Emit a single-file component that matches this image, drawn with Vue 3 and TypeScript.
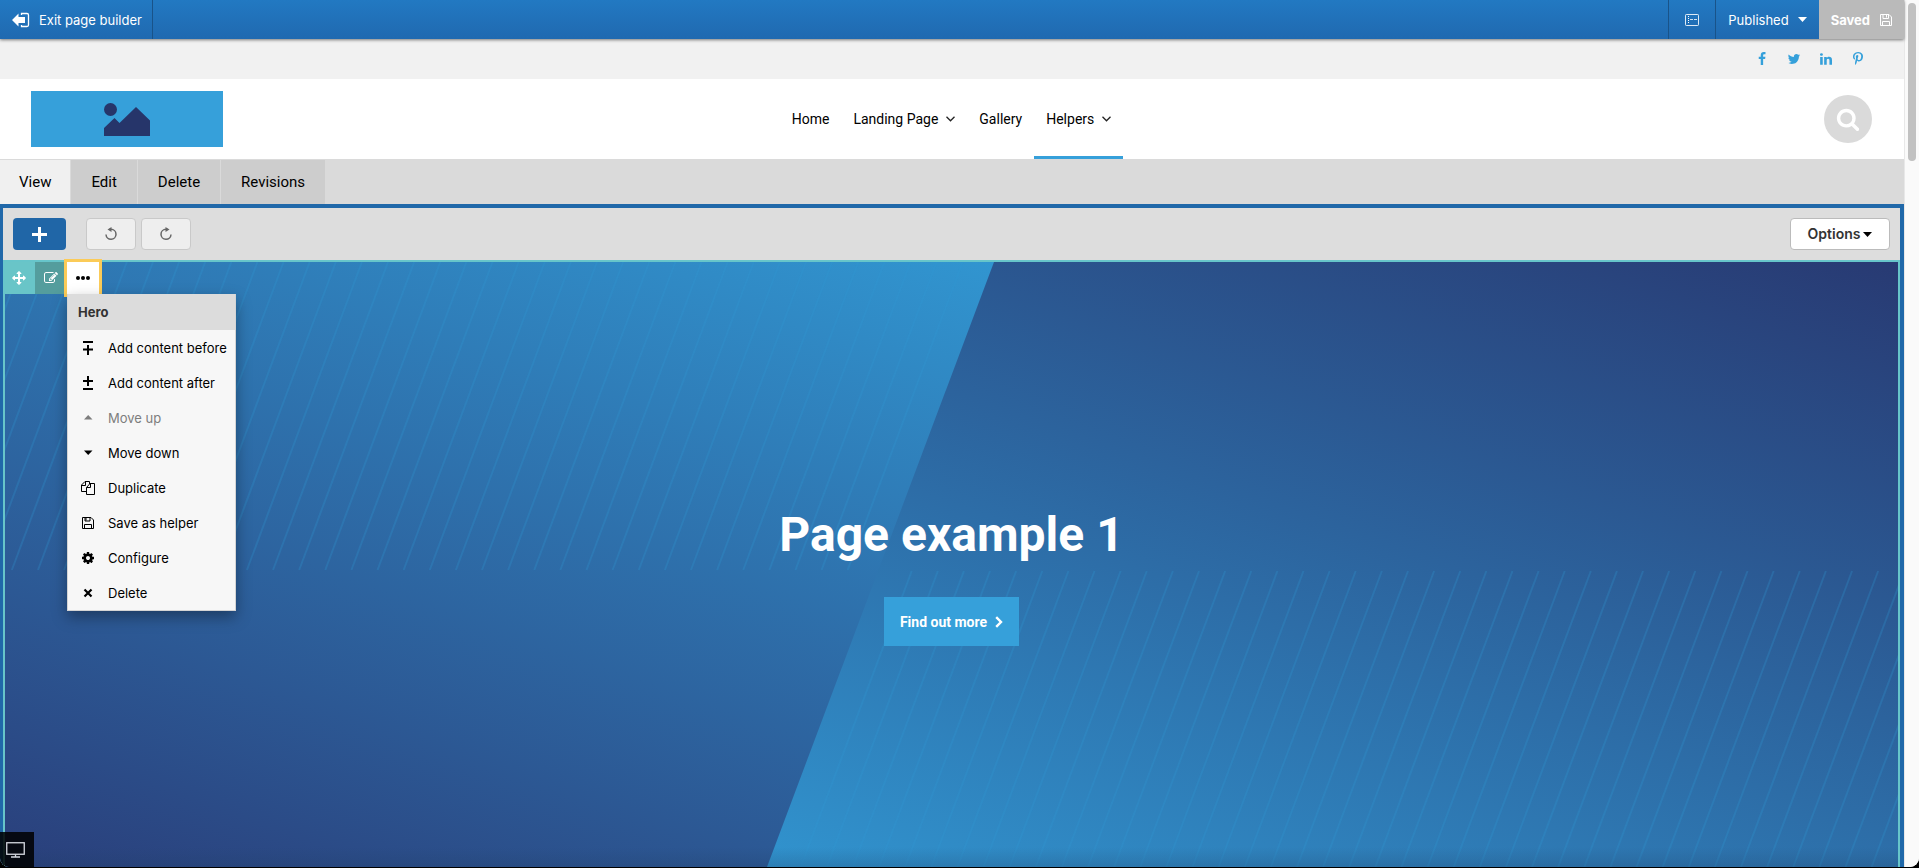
<script setup lang="ts">
interface Action {
  label: string
  icon: string
  disabled?: boolean
}

const social = [
  { name: 'Facebook', d: 'M1343 12v264h-157q-86 0-116 36t-30 108v189h293l-39 296h-254v759h-306v-759h-255v-296h255v-218q0-186 104-288.5t277-102.5q147 0 228 12z' },
  { name: 'Twitter', d: 'M1684 408q-67 98-162 167 1 14 1 42 0 130-38 259.5t-115.5 248.5-184.5 210.5-258 146-323 54.5q-271 0-496-145 35 4 78 4 225 0 401-138-105-2-188-64.5t-114-159.5q33 5 61 5 43 0 85-11-112-23-185.5-111.5t-73.5-205.5v-4q68 38 146 41-66-44-105-115t-39-154q0-88 44-163 121 149 294.5 238.5t371.5 99.5q-8-38-8-74 0-134 94.5-228.5t228.5-94.5q140 0 236 102 109-21 205-78-37 115-142 178 93-10 186-50z' },
  { name: 'LinkedIn', d: 'M477 625v991h-330v-991h330zm21-306q1 73-50.5 122t-135.5 49h-2q-82 0-132-49t-50-122q0-74 51.5-122.5t134.5-48.5 133 48.5 51 122.5zm1166 729v568h-329v-530q0-105-40.5-164.5t-126.5-59.5q-63 0-105.5 34.5t-63.5 85.5q-11 30-11 81v553h-329q2-399 2-647t-1-296l-1-48h329v144h-2q20-32 41-56t56.5-52 87-43.5 114.5-15.5q171 0 275 113.5t104 332.5z' },
  { name: 'Pinterest', d: 'M256 597q0-108 37.5-203.5t103.5-166.5 152-123 185-78 202-26q158 0 294 66.5t221 193.5 85 287q0 96-19 188t-60 177-100 149.5-145 103-189 38.5q-68 0-135-32t-96-88q-10 39-28 112.5t-23.5 95-20.5 71-26 71-32 62.5-46 77.5-62 86.5l-14 5-9-10q-15-157-15-188 0-92 21.5-206.5t66.5-287.5 52-203q-32-65-32-169 0-83 52-156t132-73q61 0 95 40.5t34 102.5q0 66-44 191t-44 187q0 63 45 104.5t109 41.5q55 0 102-25t78.5-68 56-95 38-110.5 20-111 6.5-99.5q0-173-109.5-269.5t-285.5-96.5q-200 0-334 129.5t-134 328.5q0 44 12.5 85t27 65 27 45.5 12.5 30.5q0 28-15 73t-37 45q-2 0-17-3-51-15-90.5-56t-61-94.5-32.5-108-11-106.5z' },
]

const links = [
  { label: 'Home', menu: false, active: false },
  { label: 'Landing Page', menu: true, active: false },
  { label: 'Gallery', menu: false, active: false },
  { label: 'Helpers', menu: true, active: true },
]

const tabs = ['View', 'Edit', 'Delete', 'Revisions']

const actions: Action[] = [
  { label: 'Add content before', icon: 'before' },
  { label: 'Add content after', icon: 'after' },
  { label: 'Move up', icon: 'up', disabled: true },
  { label: 'Move down', icon: 'down' },
  { label: 'Duplicate', icon: 'copy' },
  { label: 'Save as helper', icon: 'save' },
  { label: 'Configure', icon: 'cog' },
  { label: 'Delete', icon: 'cross' },
]
</script>

<template>
  <div class="window">
    <div class="page">
      <div class="topbar">
        <button class="bar-btn exit" type="button">
          <svg width="18" height="16" viewBox="0 0 18 16">
            <path d="M0 8 6.500 1.500V5H13v6H6.500v3.500z" fill="#fff" />
            <path d="M9.500 3V1.500h5.500q1.500 0 1.500 1.500v10q0 1.500-1.500 1.500h-5.500V13" fill="none" stroke="#fff" stroke-width="1.300" />
          </svg>
          <span>Exit page builder</span>
        </button>
        <div class="bar-right">
          <button class="bar-btn layout" type="button" aria-label="Layout">
            <svg width="14" height="12" viewBox="0 0 14 12" fill="none" stroke="#fff">
              <rect x=".5" y=".5" width="13" height="11" rx=".8" opacity=".85" />
              <path d="M3.500 2v8" stroke-dasharray="1 1" />
              <path d="M5 5.500h7" stroke-dasharray="3 1" opacity=".8" />
            </svg>
          </button>
          <button class="bar-btn published" type="button">
            <span>Published</span>
            <svg width="9" height="5" viewBox="0 0 9 5"><path d="M0 0h9L4.500 5z" fill="#fff" /></svg>
          </button>
          <button class="bar-btn saved" type="button">
            <span>Saved</span>
            <svg width="12" height="12" viewBox="0 0 12 12" fill="none" stroke="#fff"><path d="M.5.500h8.500L11.500 3v8.500H.5zM3 .500v4h5.500v-4M2.500 11.500V7.500h7v4M6.500 1v2.500" /></svg>
          </button>
        </div>
      </div>

      <div class="social">
        <a v-for="s in social" :key="s.name" href="#" :aria-label="s.name">
          <svg width="14" height="14" viewBox="0 0 1792 1792"><path :d="s.d" fill="currentColor" /></svg>
        </a>
      </div>

      <header class="site-header">
        <a class="logo" href="#" aria-label="Site logo">
          <svg width="46" height="33" viewBox="0 0 46 33" fill="#26356a">
            <circle cx="6.500" cy="6.500" r="6.500" />
            <path d="M0 25 10.500 15l5 5L32 4l14 13.500V33H0z" />
          </svg>
        </a>
        <nav class="main-nav">
          <a v-for="l in links" :key="l.label" href="#" :class="{ active: l.active }">
            <span>{{ l.label }}</span>
            <svg v-if="l.menu" width="9" height="6" viewBox="0 0 9 6" fill="none" stroke="#222" stroke-width="1.300"><path d="M.5.800 4.500 4.800l4-4" /></svg>
          </a>
        </nav>
        <button class="search" type="button" aria-label="Search">
          <svg width="24" height="24" viewBox="0 0 1792 1792"><path fill="#fff" d="M1216 832q0-185-131.500-316.500t-316.500-131.500-316.500 131.500-131.500 316.500 131.500 316.500 316.500 131.500 316.500-131.500 131.500-316.500zm512 832q0 52-38 90t-90 38q-54 0-90-38l-343-342q-179 124-399 124-143 0-273.500-55.500t-225-150-150-225-55.500-273.500 55.500-273.500 150-225 225-150 273.500-55.500 273.500 55.500 225 150 150 225 55.500 273.500q0 220-124 399l343 343q37 37 37 90z" /></svg>
        </button>
      </header>

      <nav class="tabs">
        <a v-for="(t, i) in tabs" :key="t" href="#" :class="{ current: i === 0 }">{{ t }}</a>
      </nav>

      <main class="builder">
        <div class="toolbar">
          <button class="add" type="button" aria-label="Add content">
            <svg width="15" height="15" viewBox="0 0 15 15"><path d="M7.500 0v15M0 7.500h15" stroke="#fff" stroke-width="3" /></svg>
          </button>
          <div class="history">
            <button type="button" aria-label="Undo">
              <svg width="14" height="14" viewBox="0 0 14 14"><path d="M2 7.500a5 5 0 1 0 5-5.200H5.500" fill="none" stroke="#666" stroke-width="1.500" /><path d="M3.500 2.500 7.500 0v5z" fill="#666" /></svg>
            </button>
            <button type="button" aria-label="Redo">
              <svg width="14" height="14" viewBox="0 0 14 14"><path d="M12 7.500a5 5 0 1 1-5-5.200H8.500" fill="none" stroke="#666" stroke-width="1.500" /><path d="M10.500 2.500 6.500 0v5z" fill="#666" /></svg>
            </button>
          </div>
          <button class="options" type="button">
            <span>Options</span>
            <svg width="9" height="5" viewBox="0 0 9 5"><path d="M0 0h9L4.500 5z" /></svg>
          </button>
        </div>

        <section class="hero">
          <svg class="hero-art" viewBox="0 0 1893 605" preserveAspectRatio="none" aria-hidden="true">
            <defs>
              <linearGradient id="shade-left" gradientUnits="userSpaceOnUse" x1="0" y1="605" x2="301" y2="-253">
                <stop offset="0" stop-color="#2a3f7b" />
                <stop offset="1" stop-color="#3196d1" />
              </linearGradient>
              <linearGradient id="shade-right" gradientUnits="userSpaceOnUse" x1="1893" y1="0" x2="1570" y2="921">
                <stop offset="0" stop-color="#283a73" />
                <stop offset="1" stop-color="#3196d1" />
              </linearGradient>
              <linearGradient id="shade-foot" x1="0" y1="0" x2="0" y2="1">
                <stop offset="0" stop-color="#1d3f66" stop-opacity="0" />
                <stop offset="1" stop-color="#1d3f66" stop-opacity=".25" />
              </linearGradient>
            </defs>
            <rect width="1893" height="605" fill="url(#shade-right)" />
            <path d="M0 0H989L762 605H0z" fill="url(#shade-left)" />
            <g stroke="#3196d4" stroke-opacity=".27" stroke-width="2">
              <line v-for="n in 37" :key="'l' + n" :x1="842.700 - (n - 1) * 26.120 + 115" y1="0" :x2="842.700 - (n - 1) * 26.120" y2="308" />
              <line v-for="n in 42" :key="'r' + n" :x1="906.700 + (n - 1) * 26.120" y1="309" :x2="795.700 + (n - 1) * 26.120" y2="605" />
            </g>
            <rect y="585" width="1893" height="20" fill="url(#shade-foot)" />
          </svg>

          <div class="block-tools">
            <button class="move" type="button" aria-label="Move block">
              <svg width="14" height="14" viewBox="0 0 1792 1792"><path fill="#fff" d="M1792 896q0 26-19 45l-256 256q-19 19-45 19t-45-19-19-45v-128h-384v384h128q26 0 45 19t19 45-19 45l-256 256q-19 19-45 19t-45-19l-256-256q-19-19-19-45t19-45 45-19h128v-384h-384v128q0 26-19 45t-45 19-45-19l-256-256q-19-19-19-45t19-45l256-256q19-19 45-19t45 19 19 45v128h384v-384h-128q-26 0-45-19t-19-45 19-45l256-256q19-19 45-19t45 19l256 256q19 19 19 45t-19 45-45 19h-128v384h384v-128q0-26 19-45t45-19 45 19l256 256q19 19 19 45z" /></svg>
            </button>
            <button class="edit" type="button" aria-label="Edit block">
              <svg width="14" height="14" viewBox="0 0 1792 1792"><path fill="#fff" d="M888 1184l116-116-152-152-116 116v56h96v96h56zm440-720q-16-16-33 1l-350 350q-17 17-1 33t33-1l350-350q17-17 1-33zm80 594v190q0 119-84.500 203.500t-203.500 84.500h-832q-119 0-203.500-84.500t-84.500-203.500v-832q0-119 84.500-203.500t203.500-84.500h832q63 0 117 25 15 7 18 23 3 17-9 29l-49 49q-14 14-32 8-23-6-45-6h-832q-66 0-113 47t-47 113v832q0 66 47 113t113 47h832q66 0 113-47t47-113v-126q0-13 9-22l64-64q15-15 35-7t20 29zm-96-738l288 288-672 672h-288v-288zm444 132l-92 92-288-288 92-92q28-28 68-28t68 28l152 152q28 28 28 68t-28 68z" /></svg>
            </button>
            <div class="more-wrap">
              <button class="more" type="button" aria-label="More actions">
                <svg width="14" height="4" viewBox="0 0 14 4"><circle cx="2" cy="2" r="2" /><circle cx="7" cy="2" r="2" /><circle cx="12" cy="2" r="2" /></svg>
              </button>
              <div class="menu">
                <div class="menu-title">Hero</div>
                <button v-for="a in actions" :key="a.label" type="button" :disabled="a.disabled">
                  <svg width="14" height="14" viewBox="0 0 14 14" fill="none" stroke="currentColor">
                    <path v-if="a.icon === 'before'" d="M2 1h10M7 4v10M2 8.500h10" stroke-width="2" />
                    <path v-else-if="a.icon === 'after'" d="M2 13h10M7 0v10M2 5h10" stroke-width="2" />
                    <path v-else-if="a.icon === 'up'" d="M3 8.500h8.500L7.200 4z" fill="currentColor" stroke="none" />
                    <path v-else-if="a.icon === 'down'" d="M3 4.500h8.500L7.200 9z" fill="currentColor" stroke="none" />
                    <path v-else-if="a.icon === 'copy'" d="M5.500 10.500H.5V4L4 .500h4.500V3M.5 4.500H4.500V.500M5.500 13.500V6.500L9 2.500h4.500v11zM5.500 6.500H9.500V2.500" />
                    <path v-else-if="a.icon === 'save'" d="M1.500 1.500h8.500l2.500 2.500v8.500h-11zM4 1.500v3.500h5v-3.500M3.500 12.500V8.500h7v4M5 2v2.500" />
                    <path v-else-if="a.icon === 'cog'" transform="scale(.0078125)" fill="currentColor" stroke="none" d="M1152 896q0-106-75-181t-181-75-181 75-75 181 75 181 181 75 181-75 75-181zm512-109v222q0 12-8 23t-20 13l-185 28q-19 54-39 91 35 50 107 138 10 12 10 25t-9 23q-27 37-99 108t-94 71q-12 0-26-9l-138-108q-44 23-91 38-16 136-29 186-7 28-36 28h-222q-14 0-24.500-8.500t-11.500-21.500l-28-184q-49-16-90-37l-141 107q-10 9-25 9-14 0-25-11-126-114-165-168-7-10-7-23 0-12 8-23 15-21 51-66.500t54-70.500q-27-50-41-99l-183-27q-13-2-21-12.500t-8-23.500v-222q0-12 8-23t19-13l186-28q14-46 39-92-40-57-107-138-10-12-10-24 0-10 9-23 26-36 98.500-107.500t94.500-71.500q13 0 26 10l138 107q44-23 91-38 16-136 29-186 7-28 36-28h222q14 0 24.500 8.500t11.500 21.500l28 184q49 16 90 37l142-107q9-9 24-9 13 0 25 10 129 119 165 170 7 8 7 22 0 12-8 23-15 21-51 66.500t-54 70.500q26 50 41 98l183 28q13 2 21 12.500t8 23.500z" />
                    <path v-else d="m3.500 3.500 7 7m0-7-7 7" stroke-width="2.200" />
                  </svg>
                  <span>{{ a.label }}</span>
                </button>
              </div>
            </div>
          </div>

          <div class="hero-copy">
            <h1>Page example 1</h1>
            <a class="cta" href="#">
              <span>Find out more</span>
              <svg width="8" height="12" viewBox="0 0 8 12" fill="none" stroke="#fff" stroke-width="2.400"><path d="m1.200 1.200 4.800 4.800-4.800 4.800" /></svg>
            </a>
          </div>
        </section>

        <button class="preview" type="button" aria-label="Preview">
          <svg width="19" height="16" viewBox="0 0 19 16" fill="none" stroke="#d6dae2"><rect x=".75" y=".75" width="17.500" height="11.500" stroke-width="1.300" /><path d="M9.500 12.500v2.500M5 15h9" stroke-width="1.300" /></svg>
        </button>
      </main>
    </div>
    <div class="scroll"><div class="thumb"></div></div>
  </div>
</template>

<style>
html,
body {
  margin: 0;
  background: #000;
}
</style>

<style scoped>
* {
  box-sizing: border-box;
}

button {
  display: flex;
  align-items: center;
  justify-content: center;
  margin: 0;
  padding: 0;
  border: 0;
  font: inherit;
  color: inherit;
}

a {
  color: inherit;
  text-decoration: none;
}

svg {
  display: block;
  flex: none;
}

.window {
  display: flex;
  height: calc(100vh - 1px);
  overflow: hidden;
  border-radius: 0 0 9px 9px;
  background: #fff;
  font: 13px/16px Inter, "Liberation Sans", sans-serif;
  color: #000;
}

.page {
  flex: 1;
  min-width: 0;
  display: flex;
  flex-direction: column;
}

.topbar {
  position: relative;
  z-index: 2;
  display: flex;
  justify-content: space-between;
  height: 39px;
  background: linear-gradient(#2279c2, #2069b0);
  box-shadow: 0 1px 3px rgba(0, 0, 0, 0.5);
  color: #fff;
}

.bar-right {
  display: flex;
}

.bar-btn {
  height: 100%;
  padding: 0 12px;
  background: none;
}

.exit {
  gap: 9px;
  padding-right: 10px;
  border-right: 1px solid #195389;
}

.layout {
  width: 47px;
  border-left: 1px solid #195389;
}

.published {
  gap: 9px;
  border-left: 1px solid #195389;
}

.saved {
  gap: 10px;
  background: #bababa;
  font-weight: 700;
}

.social {
  display: flex;
  justify-content: flex-end;
  align-items: center;
  gap: 18px;
  height: 40px;
  padding-right: 39px;
  background: #f1f1f1;
  color: #35a0da;
}

.site-header {
  display: grid;
  grid-template-columns: 1fr auto 1fr;
  align-items: center;
  height: 80px;
  padding: 0 32px 0 31px;
}

.logo {
  display: flex;
  align-items: center;
  justify-content: center;
  width: 192px;
  height: 56px;
  background: #36a0da;
}

.main-nav {
  display: flex;
  height: 80px;
  font: 14px/20px Roboto, sans-serif;
}

.main-nav a {
  display: flex;
  align-items: center;
  gap: 8px;
  padding: 3px 12px 0;
  border-bottom: 3px solid transparent;
}

.main-nav a.active {
  border-bottom-color: #36a0da;
}

.search {
  justify-self: end;
  width: 48px;
  height: 48px;
  border-radius: 50%;
  background: #dadada;
}

.tabs {
  display: flex;
  gap: 1px;
  height: 45px;
  border-top: 1px solid #dadada;
  background: #dadada;
  font: 15px/44px Roboto, sans-serif;
}

.tabs a {
  padding: 0 20px;
  background: #cdcdcd;
}

.tabs a.current {
  padding: 0 19px;
  background: #f0f0f0;
}

.builder {
  position: relative;
  flex: 1;
  display: flex;
  flex-direction: column;
  border: 4px solid #2068a9;
  border-width: 4px 4px 0 3px;
}

.toolbar {
  display: flex;
  align-items: center;
  height: 52px;
  padding: 0 10px;
  background: #ddd;
}

.toolbar button {
  height: 32px;
  border-radius: 4px;
}

.add {
  width: 53px;
  background: #2066a7;
}

.history {
  display: flex;
  gap: 5px;
  margin-left: 20px;
}

.history button {
  width: 50px;
  border: 1px solid #c9c9c9;
  background: #eee;
}

.options {
  gap: 3px;
  margin-left: auto;
  width: 100px;
  border: 1px solid #bbb;
  background: #fff;
  font-size: 14px;
  font-weight: 600;
  color: #333;
}

.hero {
  position: relative;
  flex: 1;
  display: flex;
  align-items: center;
  justify-content: center;
  border: 2px solid #67c5ca;
  border-bottom: 0;
}

.hero-art {
  position: absolute;
  inset: 0;
  width: 100%;
  height: 100%;
}

.block-tools {
  position: absolute;
  top: 0;
  left: 0;
  display: flex;
}

.block-tools > button,
.more {
  width: 32px;
  height: 32px;
}

.block-tools > .move {
  width: 30px;
  padding-right: 2px;
  background: #69c5c8;
}

.edit {
  background: #549d9d;
}

.more-wrap {
  position: relative;
}

.more {
  background: #fff;
  box-shadow: 0 0 0 3px #fbcb58;
}

.menu {
  position: absolute;
  top: 32px;
  left: 0;
  width: 169px;
  border: 1px solid #d4d4d4;
  border-top: 0;
  background: #f7f7f7;
  box-shadow: 0 6px 14px rgba(0, 0, 0, 0.35);
}

.menu-title {
  padding-left: 10px;
  background: #dcdcdc;
  color: #333;
  font-weight: 700;
  line-height: 36px;
}

.menu button {
  justify-content: flex-start;
  gap: 13px;
  width: 100%;
  height: 35px;
  padding-left: 13px;
  background: none;
}

.menu button:disabled {
  color: #7d7d7d;
}

.hero-copy {
  position: relative;
  display: flex;
  flex-direction: column;
  align-items: center;
  padding-top: 22px;
  font-family: Roboto, sans-serif;
  color: #fff;
}

h1 {
  margin: 0 0 32px;
  font-size: 48px;
  line-height: 60px;
  font-weight: 700;
}

.cta {
  display: flex;
  align-items: center;
  gap: 8px;
  height: 49px;
  padding: 0 16px;
  background: #36a0da;
  font-size: 14px;
  font-weight: 700;
}

.preview {
  position: absolute;
  left: -3px;
  bottom: 0;
  width: 34px;
  height: 35px;
  padding-right: 3px;
  background: rgba(0, 0, 0, 0.86);
}

.scroll {
  width: 15px;
  padding: 3px 3px 0;
  border-left: 1px solid #e8e8e8;
  background: #fafafa;
}

.thumb {
  width: 8px;
  height: 158px;
  border-radius: 4px;
  background: #c1c1c1;
}
</style>
